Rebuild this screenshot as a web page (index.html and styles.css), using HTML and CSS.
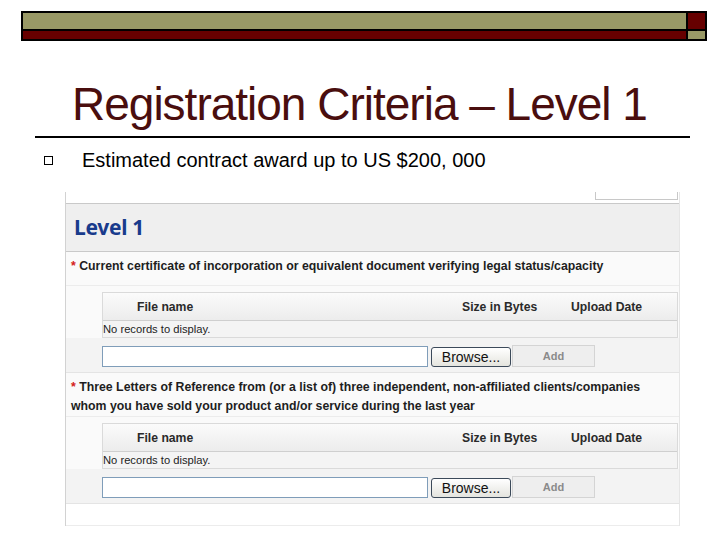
FILE: index.html
```html
<!DOCTYPE html>
<html>
<head>
<meta charset="utf-8">
<link rel="stylesheet" href="styles.css">
</head>
<body>
<div class="slide">
  <div class="topbar">
    <div class="olive"></div>
    <div class="maroon"></div>
    <div class="maroon"></div>
    <div class="olive"></div>
  </div>
  <h1 class="title">Registration Criteria – Level 1</h1>
  <div class="rule"></div>
  <div class="bullet">
    <span class="box"></span>
    <span class="btext">Estimated contract award up to US $200, 000</span>
  </div>

  <div class="panel">
    <div class="strip"><div class="tab"></div></div>
    <div class="level">Level 1</div>

    <div class="req">
      <div class="label"><span class="star">*</span> Current certificate of incorporation or equivalent document verifying legal status/capacity</div>
      <div class="files">
        <div class="grid">
          <div class="ghead"><span class="c1">File name</span><span>Size in Bytes</span><span>Upload Date</span></div>
          <div class="gempty">No records to display.</div>
        </div>
      </div>
      <div class="upload">
        <input class="file" type="text">
        <button class="browse">Browse...</button>
        <button class="add">Add</button>
      </div>
    </div>

    <div class="req">
      <div class="label"><span class="star">*</span> Three Letters of Reference from (or a list of) three independent, non-affiliated clients/companies<br>whom you have sold your product and/or service during the last year</div>
      <div class="files">
        <div class="grid">
          <div class="ghead"><span class="c1">File name</span><span>Size in Bytes</span><span>Upload Date</span></div>
          <div class="gempty">No records to display.</div>
        </div>
      </div>
      <div class="upload">
        <input class="file" type="text">
        <button class="browse">Browse...</button>
        <button class="add">Add</button>
      </div>
    </div>

    <div class="foot"></div>
  </div>
</div>
</body>
</html>
```

FILE: styles.css
```css
html, body {
  margin: 0;
  padding: 0;
  background: #ffffff;
}
.slide {
  width: 720px;
  height: 540px;
  overflow: hidden;
  font-family: "Liberation Sans", Arial, sans-serif;
}
.topbar {
  box-sizing: border-box;
  margin: 11px 0 0 21px;
  width: 686px;
  height: 30px;
  border: 2px solid #000;
  background: #000;
  display: grid;
  grid-template-columns: 1fr 17px;
  grid-template-rows: 16px 8px;
  gap: 2px;
}
.olive { background: #999966; }
.maroon { background: #660000; }

.title {
  margin: 37px 0 0 0;
  padding-left: 72px;
  height: 52px;
  font-family: "Liberation Sans", Arial, sans-serif;
  font-weight: normal;
  font-size: 46px;
  line-height: 52px;
  letter-spacing: -1px;
  color: #4a0e0e;
  white-space: nowrap;
}
.rule {
  margin: 6px 0 0 35px;
  width: 655px;
  height: 2px;
  background: #000;
}
.bullet {
  margin-top: 10px;
  padding-left: 44px;
  display: flex;
  align-items: flex-start;
  height: 24px;
}
.box {
  box-sizing: border-box;
  width: 9px;
  height: 9px;
  border: 1px solid #000;
  margin-top: 8px;
}
.btext {
  margin-left: 29px;
  font-size: 20px;
  line-height: 24px;
  color: #000;
  white-space: nowrap;
}

.panel {
  box-sizing: border-box;
  margin: 20px 0 0 65px;
  width: 615px;
  border-left: 1px solid #d2d2d2;
  border-right: 1px solid #e6e6e6;
}
.strip {
  height: 11px;
  display: flex;
  justify-content: flex-end;
  padding-right: 1px;
  background: #fff;
}
.tab {
  box-sizing: border-box;
  width: 83px;
  height: 8px;
  border: 1px solid #c8c8c8;
  border-top: none;
}
.level {
  box-sizing: border-box;
  height: 49px;
  border-top: 1px solid #c9c9c9;
  border-bottom: 1px solid #c9c9c9;
  background: #efefef;
  padding-left: 8px;
  font-family: "Noto Sans", "Liberation Sans", sans-serif;
  font-weight: bold;
  font-size: 21px;
  line-height: 47px;
  letter-spacing: -0.3px;
  color: #193b8c;
}
.label {
  box-sizing: border-box;
  min-height: 34px;
  padding: 5px 5px 0 5px;
  background: #fafafa;
  border-bottom: 1px solid #ececec;
  font-weight: bold;
  font-size: 12.3px;
  line-height: 19px;
  color: #1e1e1e;
  white-space: nowrap;
}
.star {
  color: #d42020;
}
.files {
  padding: 6px 1px 0 36px;
  background: #fafafa;
}
.grid {
  box-sizing: border-box;
  width: 576px;
  border: 1px solid #dadada;
  background: #f5f5f5;
}
.ghead {
  box-sizing: border-box;
  height: 28px;
  display: grid;
  grid-template-columns: 359px 109px 1fr;
  align-items: center;
  background: linear-gradient(#fbfbfb, #ececec);
  border-bottom: 1px solid #cfcfcf;
  font-weight: bold;
  font-size: 12.2px;
  color: #2a2a2a;
}
.c1 {
  padding-left: 34px;
}
.gempty {
  height: 16px;
  line-height: 16px;
  font-size: 11.2px;
  color: #222;
  padding-left: 0;
  background: #f4f4f4;
}
.upload {
  display: flex;
  align-items: flex-start;
  padding: 7px 0 5px 36px;
  background: #f3f3f3;
  border-bottom: 1px solid #e4e4e4;
  height: 22px;
}
.file {
  box-sizing: border-box;
  width: 326px;
  height: 21px;
  margin: 1px 0 0 0;
  padding: 0;
  border: 1px solid #7f9db9;
  background: #fff;
}
.browse {
  box-sizing: border-box;
  width: 80px;
  height: 20px;
  margin: 2px 0 0 3px;
  padding: 0;
  border: 1px solid #3c4a5a;
  border-radius: 3px;
  background: linear-gradient(#ffffff, #e4e4de);
  font-family: "Liberation Sans", Arial, sans-serif;
  font-size: 14px;
  line-height: 18px;
  color: #111;
}
.add {
  box-sizing: border-box;
  width: 83px;
  height: 22px;
  margin: 0 0 0 1px;
  padding: 0;
  border: 1px solid #d4d4d4;
  background: #eeeeee;
  font-family: "Liberation Sans", Arial, sans-serif;
  font-weight: bold;
  font-size: 11px;
  color: #8a8a8a;
}
.foot {
  height: 21px;
  background: #fff;
  border-bottom: 1px solid #ececec;
}
```
